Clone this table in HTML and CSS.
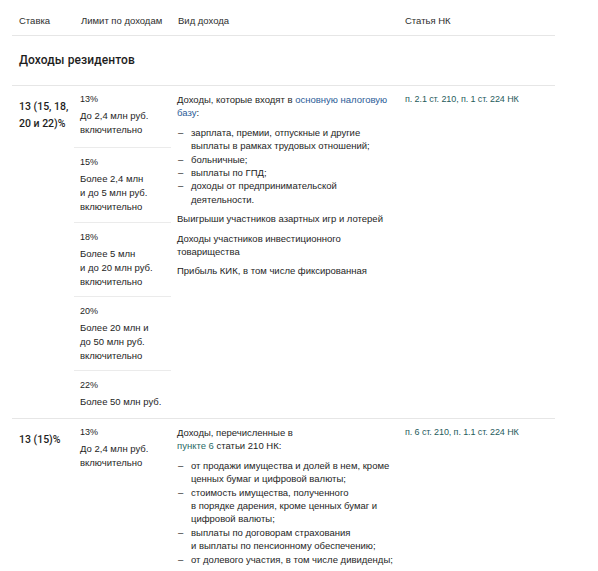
FILE: index.html
```html
<!DOCTYPE html>
<html lang="ru">
<head>
<meta charset="utf-8">
<link rel="stylesheet" href="styles.css">
</head>
<body>
<div class="table">
  <div class="head">
    <div class="hc">Ставка</div>
    <div class="hc">Лимит по доходам</div>
    <div class="hc">Вид дохода</div>
    <div class="hc hc-nk">Статья НК</div>
  </div>
  <div class="section">Доходы резидентов</div>

  <div class="row">
    <div class="rate">13 (15, 18,<br>20 и 22)%</div>
    <div class="limits">
      <div class="lim lim1"><div class="pct">13%</div><div class="ltext">До 2,4 млн руб.<br>включительно</div></div>
      <div class="lim lim2"><div class="pct">15%</div><div class="ltext">Более 2,4 млн<br>и до 5 млн руб.<br>включительно</div></div>
      <div class="lim lim3"><div class="pct">18%</div><div class="ltext">Более 5 млн<br>и до 20 млн руб.<br>включительно</div></div>
      <div class="lim lim4"><div class="pct">20%</div><div class="ltext">Более 20 млн и<br>до 50 млн руб.<br>включительно</div></div>
      <div class="lim lim5"><div class="pct">22%</div><div class="ltext">Более 50 млн руб.</div></div>
    </div>
    <div class="kind">
      <p>Доходы, которые входят в <span class="link-blue">основную налоговую</span><br><span class="link-blue">базу</span>:</p>
      <ul class="dash">
        <li>зарплата, премии, отпускные и другие<br>выплаты в рамках трудовых отношений;</li>
        <li>больничные;</li>
        <li>выплаты по ГПД;</li>
        <li>доходы от предпринимательской<br>деятельности.</li>
      </ul>
      <p>Выигрыши участников азартных игр и лотерей</p>
      <p>Доходы участников инвестиционного<br>товарищества</p>
      <p>Прибыль КИК, в том числе фиксированная</p>
    </div>
    <div class="nk">п. 2.1 ст. 210, п. 1 ст. 224 НК</div>
  </div>

  <div class="row">
    <div class="rate">13 (15)%</div>
    <div class="limits">
      <div class="lim lim1"><div class="pct">13%</div><div class="ltext">До 2,4 млн руб.<br>включительно</div></div>
    </div>
    <div class="kind">
      <p>Доходы, перечисленные в<br><span class="link-green">пункте 6</span> статьи 210 НК:</p>
      <ul class="dash">
        <li>от продажи имущества и долей в нем, кроме<br>ценных бумаг и цифровой валюты;</li>
        <li>стоимость имущества, полученного<br>в порядке дарения, кроме ценных бумаг и<br>цифровой валюты;</li>
        <li>выплаты по договорам страхования<br>и выплаты по пенсионному обеспечению;</li>
        <li>от долевого участия, в том числе дивиденды;</li>
      </ul>
    </div>
    <div class="nk">п. 6 ст. 210, п. 1.1 ст. 224 НК</div>
  </div>
</div>
</body>
</html>
```

FILE: styles.css
```css
html, body {
  margin: 0;
  padding: 0;
  background: #ffffff;
}
body {
  font-family: "Liberation Sans", Arial, sans-serif;
  color: #1e1e1e;
  overflow: hidden;
  height: 571px;
}
.table {
  margin-left: 12px;
  width: 543px;
}
.head {
  display: grid;
  grid-template-columns: 62px 97px 229px 155px;
  height: 36px;
  border-bottom: 1px solid #e6e6e6;
  box-sizing: border-box;
  align-items: center;
  font-size: 9.5px;
  color: #2e2e2e;
}
.hc {
  padding-left: 7px;
  padding-top: 5px;
}
.hc-nk {
  padding-left: 5px;
}
.section {
  height: 50px;
  box-sizing: border-box;
  padding: 17px 0 0 7px;
  font-family: Roboto, "Liberation Sans", sans-serif;
  font-size: 12px;
  font-weight: 500;
  letter-spacing: 0.1px;
  color: #1e1e1e;
  border-bottom: 1px solid #e6e6e6;
}
.row {
  display: grid;
  grid-template-columns: 62px 97px 229px 155px;
  border-bottom: 1px solid #e6e6e6;
}
.rate {
  padding: 12px 0 0 7px;
  font-family: Roboto, "Liberation Sans", sans-serif;
  font-size: 10.5px;
  font-weight: 500;
  line-height: 17px;
  color: #1e1e1e;
}
.limits {
  display: flex;
  flex-direction: column;
}
.lim {
  box-sizing: border-box;
  padding: 7px 0 0 6px;
  border-bottom: 1px solid #ebebeb;
}
.lim:last-child {
  border-bottom: none;
}
.lim1 { height: 62px; }
.lim2 { height: 75px; padding-top: 8px; }
.lim3 { height: 74px; padding-top: 8px; }
.lim4 { height: 74px; padding-top: 8px; }
.lim5 { height: 47px; padding-top: 8px; }
.row:last-child .lim1 { height: 60px; }
.pct {
  font-size: 9px;
  line-height: 12px;
  margin-bottom: 4px;
}
.ltext {
  font-size: 9.5px;
  line-height: 14px;
}
.kind {
  padding: 7px 0 10px 6px;
  font-size: 9.5px;
  line-height: 13.4px;
}
.kind p {
  margin: 0 0 6px 0;
}
.dash {
  list-style: none;
  margin: 0 0 6px 0;
  padding: 0;
}
.dash li {
  position: relative;
  padding-left: 14px;
}
.dash li::before {
  content: "–";
  position: absolute;
  left: 1px;
  top: 0;
}
.link-blue {
  color: #2b5c98;
}
.link-green {
  color: #2a6b66;
}
.nk {
  padding: 7px 0 0 5px;
  font-size: 9px;
  line-height: 13px;
  color: #1f5c5c;
  letter-spacing: -0.1px;
}
```
